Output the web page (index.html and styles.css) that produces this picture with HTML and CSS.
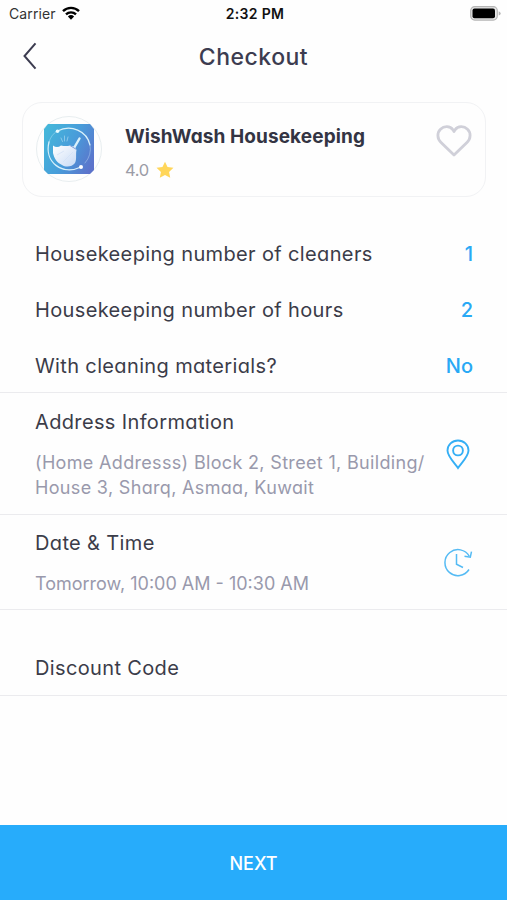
FILE: index.html
```html
<!DOCTYPE html>
<html lang="en">
  <head>
    <meta charset="UTF-8" />
    <meta name="viewport" content="width=device-width, initial-scale=1.0" />
    <title>Checkout</title>
    <link rel="stylesheet" href="styles.css" />
  </head>
  <body>
    <div class="screen">
      <div class="status-bar">
        <div class="status-carrier">
          <span class="carrier-name">Carrier</span>
          <svg class="wifi" viewBox="0 0 18 14">
            <g fill="none" stroke="#000" stroke-width="2.4">
              <path d="M1 5.2a11.4 11.4 0 0 1 16 0" />
              <path d="M4 8.4a7.2 7.2 0 0 1 10 0" />
            </g>
            <path d="M5.9 10.5a4.5 4.5 0 0 1 6.2 0L9 13.7z" />
          </svg>
        </div>
        <span class="status-time">2:32 PM</span>
        <svg class="battery" viewBox="0 0 31 15">
          <rect x="0.7" y="0.7" width="26.6" height="13.4" rx="4" fill="#e6e6e6" stroke="#b5b5b5" stroke-width="1.2" />
          <rect x="2.5" y="2.6" width="22.5" height="9.6" rx="2" />
          <path d="M28.7 5.2q2 .8 2 2.2t-2 2.2z" fill="#b5b5b5" />
        </svg>
      </div>

      <div class="header">
        <svg class="back" viewBox="0 0 14 28">
          <path d="M12.5 1.3L1.5 14l11 12.7" fill="none" stroke="#3c3c50" stroke-width="2" />
        </svg>
        <h1>Checkout</h1>
      </div>

      <div class="provider-card">
        <div class="logo">
          <svg viewBox="0 0 52 52">
            <defs>
              <linearGradient id="logo-bg" x1="0" y1="0.25" x2="1" y2="0.75">
                <stop offset="0" stop-color="#45b6da" />
                <stop offset="0.5" stop-color="#489dda" />
                <stop offset="1" stop-color="#5c73cb" />
              </linearGradient>
              <linearGradient id="brush" x1="0" y1="0" x2="1" y2="1">
                <stop offset="0" stop-color="#fff" />
                <stop offset="1" stop-color="#c7daf5" />
              </linearGradient>
            </defs>
            <path d="M5 1h42l4 5v41l-4 4H5l-4-4V6z" fill="url(#logo-bg)" />
            <g fill="none" stroke="#d9f1fb" stroke-linecap="round">
              <path d="M14.5 8C28 1 44 8 47 22" stroke-width="1.2" />
              <path d="M47 22q2 10-5 18" stroke-width="0.6" opacity="0.6" />
              <path d="M6 19C1 39 19 53 38 44" stroke-width="1.3" />
              <path d="M6 19q2-7 8-11" stroke-width="0.6" opacity="0.6" />
              <path d="M18 15l1.5 3.5M21.5 13v5M25 14l-1 4" stroke-width="1" opacity="0.45" />
              <path d="M31 25l5.500-9.500" stroke-width="2.4" />
            </g>
            <circle cx="14.5" cy="8.2" r="1.8" fill="#e9fbff" />
            <circle cx="38" cy="44" r="2" fill="#fff" />
            <path d="M10 22.500q4 3 8 0 5 1 9 0l5 1.500 1.500 3c-1 5 .5 9-1.500 13-3 4-9 4.500-13 2-5-2-8-7-9-12z" fill="url(#brush)" />
            <path d="M27 22.500l6.500 4" stroke="#7e9fda" stroke-width="1" />
            <path d="M14 32l7-4M20 39l10-10M27 40l4-5" stroke="#d3e1f6" stroke-width="0.8" />
          </svg>
        </div>
        <div class="provider-info">
          <h2>WishWash Housekeeping</h2>
          <div class="rating">
            <span>4.0</span>
            <svg class="star" viewBox="0 0 20 20">
              <path d="M10 .8l2.800 6 6.600.8-4.900 4.500 1.300 6.600L10 15.500l-5.800 3.200 1.300-6.600L.6 7.600l6.600-.8z" fill="#ffd65a" />
            </svg>
          </div>
        </div>
        <svg class="heart" viewBox="0 0 36 34">
          <path d="M18 31L4.800 18.200C1 14.500 1 8.500 4.500 5.200 8.200 1.700 14 1.900 17 5.800l1 1.800 1-1.800C22 1.900 27.800 1.700 31.500 5.200 35 8.500 35 14.500 31.200 18.200z" fill="none" stroke="#d0d0d9" stroke-width="2.8" stroke-linejoin="round" />
        </svg>
      </div>

      <div class="options">
        <div class="option">
          <span>Housekeeping number of cleaners</span>
          <span class="value">1</span>
        </div>
        <div class="option">
          <span>Housekeeping number of hours</span>
          <span class="value">2</span>
        </div>
        <div class="option">
          <span>With cleaning materials?</span>
          <span class="value">No</span>
        </div>
      </div>

      <div class="section address">
        <div>
          <h3>Address Information</h3>
          <p>
            (Home Addresss) Block 2, Street 1, Building/<br />
            House 3, Sharq, Asmaa, Kuwait
          </p>
        </div>
        <svg class="pin" viewBox="0 0 24 31">
          <path d="M12 29C9 24.500 1.500 17.500 1.500 11.500a10.500 10 0 0 1 21 0C22.500 17.500 15 24.500 12 29z" />
          <circle cx="12" cy="11.5" r="4.9" />
        </svg>
      </div>

      <div class="section date">
        <div>
          <h3>Date &amp; Time</h3>
          <p>Tomorrow, 10:00 AM - 10:30 AM</p>
        </div>
        <svg class="clock" viewBox="0 0 30 30">
          <path d="M26.300 8.300A13 13 0 1 0 26 21.500" />
          <path d="M13.500 6v10.200l6.500 3.300" />
          <path d="M21.500 8.200l5.800 1 1.200-5.500" />
        </svg>
      </div>

      <div class="section discount">
        <h3>Discount Code</h3>
      </div>

      <button class="next-btn">NEXT</button>
    </div>
  </body>
</html>
```
FILE: styles.css
```css
* {
  box-sizing: border-box;
}
body {
  margin: 0;
  background: #fefefe;
  color: #3b3c49;
  font-family: Inter, "Open Sans", sans-serif;
  font-feature-settings: "cv11";
}
h1,
h2,
h3,
p {
  margin: 0;
  font-weight: 400;
  white-space: nowrap;
}
svg {
  display: block;
  flex-shrink: 0;
}
.screen {
  height: 900px;
  display: flex;
  flex-direction: column;
  overflow: hidden;
}
.status-bar {
  height: 28px;
  padding: 0 6px 2px 9px;
  display: grid;
  grid-template-columns: 1fr auto 1fr;
  align-items: center;
  font-size: 14px;
  color: #111;
  font-feature-settings: normal;
}
.status-carrier {
  display: flex;
  align-items: center;
  gap: 6px;
}
.carrier-name {
  color: #333;
  letter-spacing: 0.1px;
}
.wifi {
  width: 18px;
  height: 14px;
  margin-top: -1px;
}
.status-time {
  font-weight: 600;
  letter-spacing: 0.3px;
}
.battery {
  width: 31px;
  height: 15px;
  justify-self: end;
}
.header {
  height: 58px;
  padding: 0 23px;
  display: grid;
  grid-template-columns: 1fr auto 1fr;
  align-items: center;
}
.back {
  width: 14px;
  height: 28px;
  margin-top: -2px;
}
.header h1 {
  font-size: 23px;
  font-weight: 500;
  letter-spacing: 0.5px;
  color: #3c3c50;
}
.provider-card {
  height: 95px;
  margin: 16px 21px 0 22px;
  padding: 0 13px;
  display: flex;
  border: 1px solid #f1f2f4;
  border-radius: 20px;
}
.logo {
  width: 66px;
  height: 66px;
  margin-top: 13px;
  display: flex;
  align-items: center;
  justify-content: center;
  border: 1px solid #e8eef0;
  border-radius: 50%;
}
.logo svg {
  width: 52px;
  height: 52px;
}
.provider-info {
  flex: 1;
  padding: 20px 0 0 23px;
}
.provider-info h2 {
  font-size: 19px;
  line-height: 28px;
  font-weight: 700;
  letter-spacing: 0.1px;
  color: #333443;
}
.rating {
  height: 37px;
  display: flex;
  align-items: center;
  gap: 7px;
  font-size: 16.5px;
  letter-spacing: -0.3px;
  color: #9b9ca6;
}
.star {
  width: 18px;
  height: 18px;
}
.heart {
  width: 36px;
  height: 34px;
  margin-top: 21px;
}
.options {
  height: 196px;
  padding: 29px 34px 0 35px;
  border-bottom: 1px solid #ebebee;
}
.option {
  height: 56px;
  display: flex;
  align-items: center;
  justify-content: space-between;
  font-size: 20px;
  letter-spacing: 0.36px;
  white-space: nowrap;
}
.value {
  color: #29a9f5;
  font-weight: 500;
  letter-spacing: 0;
}
.section {
  padding: 0 35px;
  display: flex;
  justify-content: space-between;
  border-bottom: 1px solid #ebebee;
}
.section h3 {
  font-size: 20px;
  line-height: 28px;
  letter-spacing: 0.36px;
}
.section p {
  font-size: 18px;
  line-height: 25px;
  color: #9999ac;
}
.address {
  height: 122px;
  padding-top: 15px;
}
.address p {
  margin-top: 14px;
  letter-spacing: 0.33px;
}
.date {
  height: 95px;
  padding-top: 14px;
}
.date p {
  margin-top: 14px;
}
.pin {
  width: 24px;
  height: 31px;
  margin: 31px 2px 0 0;
  fill: none;
  stroke: #35aff5;
  stroke-width: 1.9;
}
.clock {
  width: 30px;
  height: 30px;
  margin: 19px -1px 0 0;
  fill: none;
  stroke: #55bbf4;
  stroke-width: 1.5;
}
.discount {
  height: 86px;
  padding-top: 44px;
}
.next-btn {
  height: 75px;
  margin-top: auto;
  padding: 2px 0 0;
  border: 0;
  background: #27acfb;
  color: #fff;
  font: 500 18px Inter, "Open Sans", sans-serif;
}
```
